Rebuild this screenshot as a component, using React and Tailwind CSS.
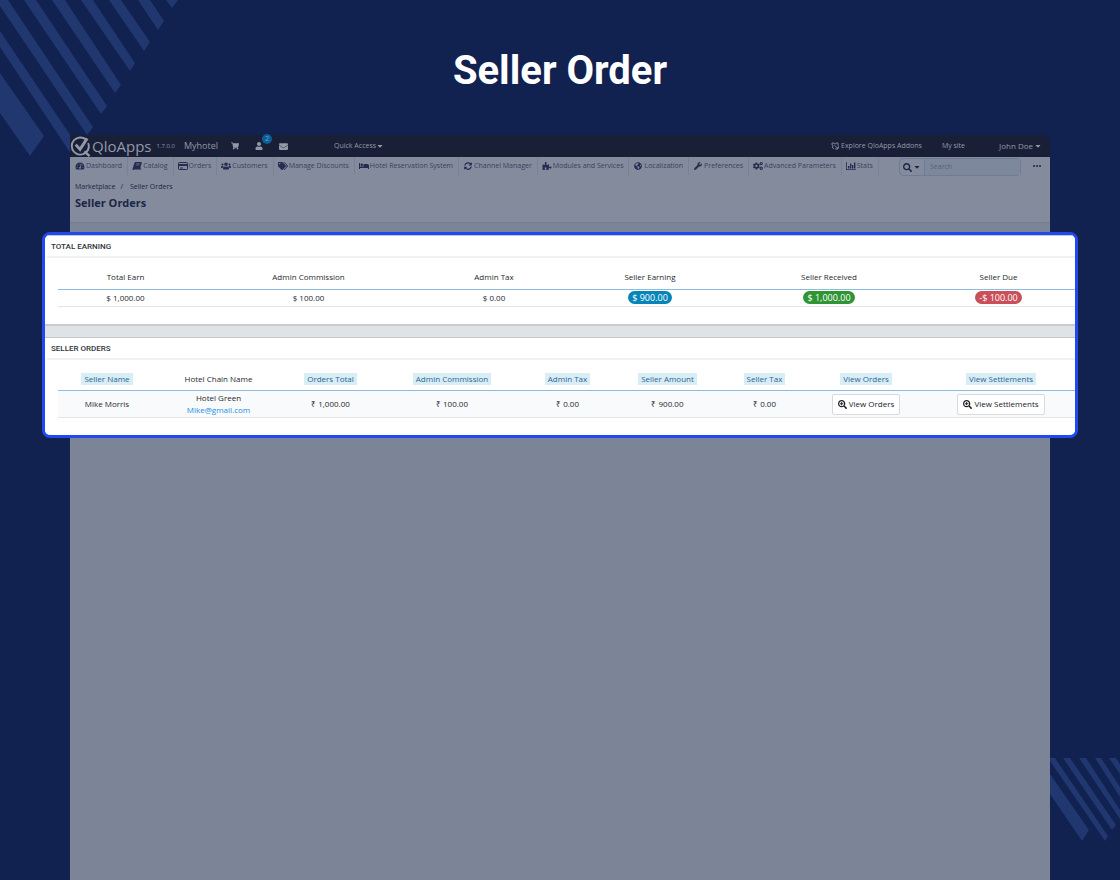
import {
  FaBed,
  FaCaretDown,
  FaCogs,
  FaEnvelope,
  FaGlobeAmericas,
  FaPuzzlePiece,
  FaSearch,
  FaSearchPlus,
  FaShoppingCart,
  FaSyncAlt,
  FaTachometerAlt,
  FaTags,
  FaUser,
  FaUsers,
  FaWrench,
} from "react-icons/fa";

const BookIcon = ({ className }) => (
  <svg viewBox="0 0 20 16" className={className}>
    <path d="M7 0h11.500q1.500 0 1 1.500L16.500 13q-.4 1.200-1.600 1.200H4.500q-1 0-.7.9h12.500L17.500 12l.8.500-1 3.500H3q-2.600 0-1.800-2.600L5 1.500Q5.500 0 7 0z" fill="currentColor" />
    <path d="M8.500 3.500h7M7.800 6h7" stroke="#848b9d" strokeWidth="1.100" />
  </svg>
);

const CardIcon = ({ className }) => (
  <svg viewBox="0 0 20 16" className={className} fill="none" stroke="currentColor" strokeWidth="2">
    <rect x="1" y="1" width="18" height="14" rx="1.5" />
    <path d="M1 6h18" strokeWidth="4" />
    <path d="M4 12h6" />
  </svg>
);

const StatsIcon = ({ className }) => (
  <svg viewBox="0 0 20 16" className={className} fill="currentColor">
    <path d="M0 0h1.600v14.400H20V16H0zM4 8h2.800v5H4zM8 3h2.800v10H8zM12 6h2.800v7H12zM16 1h2.800v12H16z" />
  </svg>
);

const AddonsIcon = () => (
  <svg viewBox="0 0 16 16" className="h-2 w-2 shrink-0" fill="none" stroke="currentColor" strokeWidth="1.6">
    <path d="M2 2h4a2 2 0 0 0 4 0h4v5M2 2v4a2 2 0 0 1 0 4l4 4M14 7a2.5 2.5 0 1 1-3 3l-4-3M8 14h6v-4" />
  </svg>
);

const Logo = () => (
  <svg viewBox="0 0 44 44" className="h-[21px] w-[21px] shrink-0" fill="none" stroke="currentColor">
    <path d="M33 7A18 18 0 1 0 33 35A18 18 0 0 0 38 15" strokeWidth="4" />
    <path d="M12 18l9 10L36 5" strokeWidth="6" />
    <path d="M30 32l11 10" strokeWidth="5" />
  </svg>
);

const navItems = [
  { label: "Dashboard", icon: FaTachometerAlt },
  { label: "Catalog", icon: BookIcon },
  { label: "Orders", icon: CardIcon },
  { label: "Customers", icon: FaUsers },
  { label: "Manage Discounts", icon: FaTags },
  { label: "Hotel Reservation System", icon: FaBed },
  { label: "Channel Manager", icon: FaSyncAlt },
  { label: "Modules and Services", icon: FaPuzzlePiece },
  { label: "Localization", icon: FaGlobeAmericas },
  { label: "Preferences", icon: FaWrench },
  { label: "Advanced Parameters", icon: FaCogs },
  { label: "Stats", icon: StatsIcon },
];

const earnings = [
  { label: "Total Earn", value: "$ 1,000.00", col: "w-[135px]" },
  { label: "Admin Commission", value: "$ 100.00", col: "w-[231px]" },
  { label: "Admin Tax", value: "$ 0.00", col: "w-[140px]" },
  { label: "Seller Earning", value: "$ 900.00", col: "w-[172px]", badge: "bg-[#0785b8]" },
  { label: "Seller Received", value: "$ 1,000.00", col: "w-[186px]", badge: "bg-[#2f9434]" },
  { label: "Seller Due", value: "-$ 100.00", col: "w-[153px]", badge: "bg-[#c94f58]" },
];

const orderColumns = [
  { label: "Seller Name", col: "w-[98px]", sortable: true },
  { label: "Hotel Chain Name", col: "w-[125px]" },
  { label: "Orders Total", col: "w-[99px]", sortable: true },
  { label: "Admin Commission", col: "w-[144px]", sortable: true },
  { label: "Admin Tax", col: "w-[87px]", sortable: true },
  { label: "Seller Amount", col: "w-[113px]", sortable: true },
  { label: "Seller Tax", col: "w-[81px]", sortable: true },
  { label: "View Orders", col: "w-[122px]", sortable: true },
  { label: "View Settlements", col: "w-[148px]", sortable: true },
];

const orders = [
  {
    seller: "Mike Morris",
    hotel: "Hotel Green",
    email: "Mike@gmail.com",
    total: "₹ 1,000.00",
    commission: "₹ 100.00",
    adminTax: "₹ 0.00",
    amount: "₹ 900.00",
    sellerTax: "₹ 0.00",
  },
];

const Stripes = () => (
  <>
    <svg viewBox="0 0 180 160" className="absolute left-0 top-0 h-[160px] w-[180px]" fill="#21376f">
      <path d="M0 73L44 136L30 156L0 113z" />
      <path d="M0 31L79 148L73 157L0 47z" />
      <path d="M-4 0H8L93 127L87 135z" />
      <path d="M24 0H36L107 106L101 114z" />
      <path d="M52 0H65L121 85L115 93z" />
      <path d="M81 0H93L135 63L130 71z" />
      <path d="M109 0H121L150 42L144 51z" />
      <path d="M138 0H150L164 21L158 30z" />
      <path d="M166 0H178L172 8z" />
    </svg>
    <svg viewBox="0 0 70 84" className="absolute right-0 top-[758px] h-[84px] w-[70px]" fill="#21376f">
      <path d="M0 16L39 72L32 83L0 36z" />
      <path d="M0 0H5L58 78L55 83L0 3z" />
      <path d="M13 0H20L66 67L62 72z" />
      <path d="M29 0H36L70 52V61z" />
      <path d="M45 0H51L70 29V39z" />
      <path d="M59 0H66L70 6V16z" />
    </svg>
  </>
);

const TopBar = () => (
  <header className="flex h-[22px] items-center rounded-tr-md bg-[#181f37] text-[7px] text-[#9499a9]">
    <Logo />
    <span className="ml-px text-[15px] leading-5">QloApps</span>
    <span className="ml-[5px] text-[6px]">1.7.0.0</span>
    <a href="#shop" className="ml-[9px] text-[9px]">Myhotel</a>
    <button type="button" aria-label="Cart" className="ml-[13px]">
      <FaShoppingCart size={8} />
    </button>
    <button type="button" aria-label="Customers" className="relative ml-4">
      <FaUser size={8} />
      <span className="absolute -top-2 left-[7px] h-[10px] w-[10px] rounded-full bg-[#06609a] text-center leading-[10px]">2</span>
    </button>
    <button type="button" aria-label="Messages" className="ml-4">
      <FaEnvelope size={9} />
    </button>
    <button type="button" className="ml-[46px] flex items-center">
      Quick Access <FaCaretDown size={8} />
    </button>
    <div className="ml-auto mr-2 flex items-center">
      <a href="#addons" className="flex items-center gap-0.5">
        <AddonsIcon /> Explore QloApps Addons
      </a>
      <a href="#site" className="ml-5">My site</a>
      <button type="button" className="ml-[34px] flex items-center gap-px text-[8px]">
        John Doe <FaCaretDown size={8} />
      </button>
    </div>
  </header>
);

const NavBar = () => (
  <nav className="flex items-start whitespace-nowrap text-[7px] text-[#38425f]">
    <ul className="flex pl-px">
      {navItems.map(({ label, icon: Icon }) => (
        <li key={label} className="border-r border-[#788197]">
          <a href="#nav" className="flex h-[18px] items-center gap-px pl-1 pr-[5px]">
            <span className="flex w-[10px] justify-center text-[#222d50]">
              <Icon className="h-2 w-[10px]" />
            </span>
            {label}
          </a>
        </li>
      ))}
    </ul>
    <form className="ml-auto mt-px flex h-[18px] w-[122px] shrink-0 rounded-sm border border-[#6d7c97]">
      <button type="button" aria-label="Search in" className="flex w-6 shrink-0 items-center justify-center gap-px text-[#1b2547]">
        <FaSearch size={9} />
        <FaCaretDown size={8} />
      </button>
      <input
        type="search"
        aria-label="Search"
        placeholder="Search"
        className="w-full min-w-0 border-l border-[#6d7c97] bg-[#7e889d] px-[5px] outline-none placeholder:text-[#566180]"
      />
    </form>
    <button type="button" aria-label="More" className="ml-3 mr-[9px] flex h-[18px] items-center gap-px text-[#1b2547]">
      <span className="h-0.5 w-0.5 rounded-full bg-current" />
      <span className="h-0.5 w-0.5 rounded-full bg-current" />
      <span className="h-0.5 w-0.5 rounded-full bg-current" />
    </button>
  </nav>
);

const Panel = ({ title, children }) => (
  <section className="border-t border-[#c3c8cb] bg-white pb-[17px]">
    <h2 className="ml-[2px] h-[22px] border-b-2 border-[#f1f2f3] pl-1 font-['Roboto',sans-serif] text-[8px] leading-[21px] font-medium text-[#30343a]">
      {title}
    </h2>
    <div className="ml-[13px] pt-2">{children}</div>
  </section>
);

const EarningTable = () => (
  <table className="w-full table-fixed text-center text-[8px] leading-3">
    <thead>
      <tr className="h-[23px] border-b border-[#8dbce0]">
        {earnings.map(({ label, col }) => (
          <th key={label} className={`${col} font-normal`}>{label}</th>
        ))}
      </tr>
    </thead>
    <tbody>
      <tr className="h-[17px] border-b border-[#e3e5e7]">
        {earnings.map(({ label, value, badge }) => (
          <td key={label}>
            {badge ? (
              <span className={`${badge} mx-auto block w-fit rounded-full px-1 text-[9px] leading-[13px] text-white`}>{value}</span>
            ) : (
              value
            )}
          </td>
        ))}
      </tr>
    </tbody>
  </table>
);

const ViewButton = ({ children }) => (
  <button type="button" className="mx-auto flex h-[21px] items-center gap-0.5 rounded-xs border border-[#d8dadd] bg-white px-[5px] text-[#202226]">
    <FaSearchPlus size={9} />
    {children}
  </button>
);

const OrdersTable = () => (
  <table className="w-full table-fixed text-center text-[8px] leading-3">
    <thead>
      <tr className="h-[23px] border-b border-[#8dbce0]">
        {orderColumns.map(({ label, col, sortable }) => (
          <th key={label} className={`${col} font-normal`}>
            {sortable ? (
              <a href="#sort" className="mx-auto block w-fit bg-[#d9edf7] px-[3px] text-[#2a6590]">{label}</a>
            ) : (
              label
            )}
          </th>
        ))}
      </tr>
    </thead>
    <tbody>
      {orders.map((order) => (
        <tr key={order.email} className="h-[27px] border-b border-[#e3e5e7] bg-[#f9fafc]">
          <td>{order.seller}</td>
          <td>
            {order.hotel}
            <a href="#mail" className="block text-[#1a8fe3]">{order.email}</a>
          </td>
          <td>{order.total}</td>
          <td>{order.commission}</td>
          <td>{order.adminTax}</td>
          <td>{order.amount}</td>
          <td>{order.sellerTax}</td>
          <td><ViewButton>View Orders</ViewButton></td>
          <td><ViewButton>View Settlements</ViewButton></td>
        </tr>
      ))}
    </tbody>
  </table>
);

const App = () => {
  return (
    <div className="relative flex min-h-screen flex-col bg-[#112150] font-['Open_Sans',sans-serif]">
      <Stripes />
      <h1 className="relative pt-[47px] text-center font-['Roboto',sans-serif] text-[40px] leading-[48px] font-bold text-white">
        Seller Order
      </h1>
      <main className="relative mx-[70px] mt-10 flex grow flex-col bg-[#7c8497]">
        {/* the bar's own corner shows the page colour behind it */}
        <div className="bg-[#112150]">
          <TopBar />
        </div>
        <div className="h-[66px] border-b border-[#747c90] bg-[#848b9d]">
          <NavBar />
          <div className="px-[5px] pt-[5px] text-[#1b2547]">
            <p className="flex gap-[5px] text-[7px] leading-3">
              <a href="#marketplace">Marketplace</a>
              <span>/</span>
              <span className="ml-0.5">Seller Orders</span>
            </p>
            <p className="text-[11px] leading-5 font-bold">Seller Orders</p>
          </div>
        </div>

        <div className="-mx-[28px] mt-[9px] overflow-hidden rounded-lg border-3 border-[#2149f2] bg-[#dfe3e6] text-[#26292e]">
          <div className="border-b-2 border-[#c8cccf]">
            <Panel title="TOTAL EARNING">
              <EarningTable />
            </Panel>
          </div>
          <div className="mt-[11px]">
            <Panel title="SELLER ORDERS">
              <OrdersTable />
            </Panel>
          </div>
        </div>
      </main>
    </div>
  );
};

export default App;
